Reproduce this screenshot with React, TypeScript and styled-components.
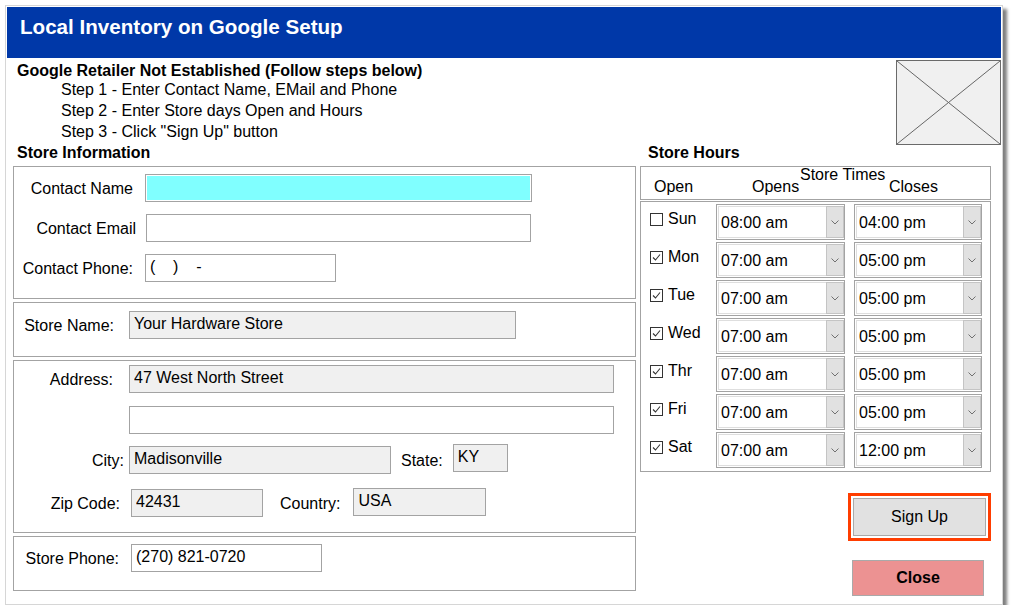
import React from "react";
import styled, { createGlobalStyle } from "styled-components";

const GlobalStyle = createGlobalStyle`
  html, body { margin: 0; padding: 0; background: #ffffff; }
  body {
    font-family: "Liberation Sans", Arial, sans-serif;
    font-size: 16px;
    color: #000;
  }
  *, *::before, *::after { box-sizing: border-box; }
`;

const Window = styled.div`
  margin: 5px 0 0 5px;
  width: 998px;
  height: 600px;
  border: 1px solid #d6d6d6;
  padding: 1px;
  background: #fff;
  box-shadow: 4px 4px 3px rgba(0, 0, 0, 0.5);
  display: flex;
  flex-direction: column;
`;

const TitleBar = styled.div`
  height: 51px;
  flex: none;
  background: #0038a8;
  color: #fff;
  font-family: "Liberation Sans", Arial, sans-serif;
  font-weight: bold;
  font-size: 20.6px;
  line-height: 24px;
  padding: 8px 0 0 13px;
`;

const Content = styled.div`
  flex: 1;
  display: flex;
  flex-direction: column;
  padding-left: 6px;
`;

const TopArea = styled.div`
  height: 86px;
  display: flex;
  align-items: flex-start;
`;

const Instructions = styled.div`
  padding: 4px 0 0 4px;
`;

const Heading = styled.div`
  font-weight: bold;
  line-height: 17px;
`;

const Step = styled.div`
  line-height: 21px;
  padding-left: 44px;
`;

const Placeholder = styled.div`
  margin-left: auto;
  margin-top: 2px;
  width: 105px;
  height: 85px;
  border: 1px solid #6a6a6a;
  background: #f0f0f0;
  svg { display: block; width: 100%; height: 100%; }
`;

const Main = styled.div`
  display: flex;
  gap: 4px;
`;

const Column = styled.div<{ $w: number }>`
  width: ${(p) => p.$w}px;
  flex: none;
  display: flex;
  flex-direction: column;
`;

const SectionTitle = styled.div<{ $pl: number }>`
  font-weight: bold;
  line-height: 17px;
  padding-left: ${(p) => p.$pl}px;
  margin-bottom: 5px;
`;

const Frames = styled.div`
  display: flex;
  flex-direction: column;
  gap: 3px;
`;

const Frame = styled.div<{ $h: number; $pt: number }>`
  height: ${(p) => p.$h}px;
  border: 1px solid #a3a3a3;
  padding-top: ${(p) => p.$pt}px;
  display: flex;
  flex-direction: column;
`;

const Row = styled.div<{ $mt?: number }>`
  display: flex;
  align-items: center;
  margin-top: ${(p) => p.$mt ?? 0}px;
`;

const Label = styled.div<{ $w?: number; $pr?: number; $pl?: number }>`
  ${(p) => (p.$w ? `width: ${p.$w}px;` : "")}
  flex: none;
  text-align: right;
  white-space: nowrap;
  padding-right: ${(p) => p.$pr ?? 0}px;
  padding-left: ${(p) => p.$pl ?? 0}px;
  line-height: 18px;
  padding-top: 2px;
`;

const Field = styled.input<{ $w: number; $bg?: string; $mt?: number }>`
  width: ${(p) => p.$w}px;
  height: 28px;
  flex: none;
  margin: ${(p) => p.$mt ?? 0}px 0 0 0;
  border: 1px solid #a3a3a3;
  background: ${(p) => p.$bg ?? "#ffffff"};
  font-family: "Liberation Sans", Arial, sans-serif;
  font-size: 16px;
  color: #000;
  padding: 0 4px 3px 4px;
  outline: none;
  &:focus {
    box-shadow: inset 0 0 0 1px #ffffff;
  }
`;

const HoursHeader = styled.div`
  height: 34px;
  border: 1px solid #a3a3a3;
  display: flex;
  flex-direction: column;
`;

const HeadLine = styled.div<{ $mt?: number; $lh: number }>`
  display: flex;
  line-height: ${(p) => p.$lh}px;
  margin-top: ${(p) => p.$mt ?? 0}px;
`;

const HeadText = styled.div<{ $w: number; $pl: number }>`
  width: ${(p) => p.$w}px;
  flex: none;
  padding-left: ${(p) => p.$pl}px;
  white-space: nowrap;
`;

const HoursBox = styled.div`
  margin-top: 1px;
  border: 1px solid #a3a3a3;
  padding: 2px 0 3px 0;
  display: flex;
  flex-direction: column;
  gap: 2px;
`;

const DayRow = styled.div`
  display: flex;
  height: 36px;
`;

const DayCell = styled.label`
  width: 75px;
  flex: none;
  display: flex;
  align-items: center;
  gap: 5px;
  padding-left: 9px;
  margin-bottom: 6px;
`;

const CheckBox = styled.span`
  width: 13px;
  height: 13px;
  flex: none;
  border: 1px solid #333;
  background: #fff;
  display: flex;
  align-items: center;
  justify-content: center;
  svg { display: block; }
`;

const TimeSelect = styled.div<{ $w: number; $ml?: number }>`
  width: ${(p) => p.$w}px;
  flex: none;
  margin-left: ${(p) => p.$ml ?? 0}px;
  border: 1px solid #a3a3a3;
  box-shadow: inset 0 0 0 1px #ffffff, inset 0 0 0 2px #dedede;
  display: flex;
  align-items: center;
  padding-left: 4px;
`;

const TimeText = styled.span`
  flex: 1;
  line-height: 18px;
  padding-top: 1px;
`;

const DropButton = styled.span`
  width: 18px;
  height: 32px;
  flex: none;
  background: #e1e1e1;
  border: 1px solid #c4c4c4;
  display: flex;
  align-items: center;
  justify-content: center;
  svg { display: block; }
`;

const ButtonArea = styled.div`
  display: flex;
  flex-direction: column;
  align-items: flex-end;
  margin-top: 21px;
`;

const Ring = styled.div`
  width: 143px;
  height: 48px;
  border: 3px solid #ff3d00;
  padding: 2px;
`;

const ActionButton = styled.button<{ $bg: string; $bold?: boolean }>`
  width: 100%;
  height: 100%;
  background: ${(p) => p.$bg};
  border: 1px solid #a9a9a9;
  font-family: "Liberation Sans", Arial, sans-serif;
  font-size: 16px;
  font-weight: ${(p) => (p.$bold ? "bold" : "normal")};
  color: #000;
  padding: 0;
`;

const CloseWrap = styled.div`
  width: 132px;
  height: 36px;
  margin-top: 19px;
  margin-right: 7px;
`;

const Check = () => (
  <svg width="11" height="11" viewBox="0 0 11 11">
    <polyline points="2,5.5 4.5,8 9,2.5" fill="none" stroke="#333" strokeWidth="1.1" />
  </svg>
);

const Chevron = () => (
  <svg width="8" height="5" viewBox="0 0 8 5">
    <polyline points="0.5,0.5 4,4 7.5,0.5" fill="none" stroke="#707070" strokeWidth="1" />
  </svg>
);

const hours = [
  { day: "Sun", open: false, opens: "08:00 am", closes: "04:00 pm" },
  { day: "Mon", open: true, opens: "07:00 am", closes: "05:00 pm" },
  { day: "Tue", open: true, opens: "07:00 am", closes: "05:00 pm" },
  { day: "Wed", open: true, opens: "07:00 am", closes: "05:00 pm" },
  { day: "Thr", open: true, opens: "07:00 am", closes: "05:00 pm" },
  { day: "Fri", open: true, opens: "07:00 am", closes: "05:00 pm" },
  { day: "Sat", open: true, opens: "07:00 am", closes: "12:00 pm" },
];

const GRAY = "#f0f0f0";

export default function App() {
  return (
    <>
      <GlobalStyle />
      <Window>
        <TitleBar>Local Inventory on Google Setup</TitleBar>
        <Content>
          <TopArea>
            <Instructions>
              <Heading>Google Retailer Not Established (Follow steps below)</Heading>
              <Step>Step 1 - Enter Contact Name, EMail and Phone</Step>
              <Step>Step 2 - Enter Store days Open and Hours</Step>
              <Step>Step 3 - Click "Sign Up" button</Step>
            </Instructions>
            <Placeholder>
              <svg viewBox="0 0 100 100" preserveAspectRatio="none">
                <line x1="0" y1="0" x2="100" y2="100" stroke="#666" strokeWidth="1" vectorEffect="non-scaling-stroke" />
                <line x1="100" y1="0" x2="0" y2="100" stroke="#666" strokeWidth="1" vectorEffect="non-scaling-stroke" />
              </svg>
            </Placeholder>
          </TopArea>
          <Main>
            <Column $w={623}>
              <SectionTitle $pl={4}>Store Information</SectionTitle>
              <Frames>
                <Frame $h={133} $pt={7}>
                  <Row>
                    <Label $w={131} $pr={12}>Contact Name</Label>
                    <Field $w={387} $bg="#80ffff" autoFocus defaultValue="" />
                  </Row>
                  <Row $mt={12}>
                    <Label $w={132} $pr={10}>Contact Email</Label>
                    <Field $w={385} defaultValue="" />
                  </Row>
                  <Row $mt={12}>
                    <Label $w={131} $pr={12}>Contact Phone:</Label>
                    <Field $w={191} defaultValue="(    )    -" />
                  </Row>
                </Frame>
                <Frame $h={55} $pt={8}>
                  <Row>
                    <Label $w={115} $pr={15}>Store Name:</Label>
                    <Field $w={387} $bg={GRAY} readOnly defaultValue="Your Hardware Store" />
                  </Row>
                </Frame>
                <Frame $h={173} $pt={4}>
                  <Row>
                    <Label $w={115} $pr={16}>Address:</Label>
                    <Field $w={485} $bg={GRAY} readOnly defaultValue="47 West North Street" />
                  </Row>
                  <Row $mt={13}>
                    <Label $w={115} />
                    <Field $w={485} defaultValue="" />
                  </Row>
                  <Row $mt={12}>
                    <Label $w={115} $pr={5}>City:</Label>
                    <Field $w={262} $bg={GRAY} readOnly defaultValue="Madisonville" />
                    <Label $pl={10} $pr={10}>State:</Label>
                    <Field $w={55} $bg={GRAY} $mt={-4} readOnly defaultValue="KY" />
                  </Row>
                  <Row $mt={15}>
                    <Label $w={117} $pr={11}>Zip Code:</Label>
                    <Field $w={132} $bg={GRAY} readOnly defaultValue="42431" />
                    <Label $pl={17} $pr={13}>Country:</Label>
                    <Field $w={133} $bg={GRAY} $mt={-2} readOnly defaultValue="USA" />
                  </Row>
                </Frame>
                <Frame $h={55} $pt={7}>
                  <Row>
                    <Label $w={117} $pr={12}>Store Phone:</Label>
                    <Field $w={191} readOnly defaultValue="(270) 821-0720" />
                  </Row>
                </Frame>
              </Frames>
            </Column>
            <Column $w={351}>
              <SectionTitle $pl={8}>Store Hours</SectionTitle>
              <HoursHeader>
                <HeadLine $lh={15}>
                  <HeadText $w={75} $pl={0} />
                  <HeadText $w={274} $pl={84}>Store Times</HeadText>
                </HeadLine>
                <HeadLine $lh={16} $mt={-3}>
                  <HeadText $w={75} $pl={13}>Open</HeadText>
                  <HeadText $w={138} $pl={36}>Opens</HeadText>
                  <HeadText $w={136} $pl={35}>Closes</HeadText>
                </HeadLine>
              </HoursHeader>
              <HoursBox>
                {hours.map((h) => (
                  <DayRow key={h.day}>
                    <DayCell>
                      <CheckBox>{h.open ? <Check /> : null}</CheckBox>
                      {h.day}
                    </DayCell>
                    <TimeSelect $w={129}>
                      <TimeText>{h.opens}</TimeText>
                      <DropButton><Chevron /></DropButton>
                    </TimeSelect>
                    <TimeSelect $w={128} $ml={9}>
                      <TimeText>{h.closes}</TimeText>
                      <DropButton><Chevron /></DropButton>
                    </TimeSelect>
                  </DayRow>
                ))}
              </HoursBox>
              <ButtonArea>
                <Ring>
                  <ActionButton $bg="#e1e1e1">Sign Up</ActionButton>
                </Ring>
                <CloseWrap>
                  <ActionButton $bg="#ec9292" $bold>Close</ActionButton>
                </CloseWrap>
              </ButtonArea>
            </Column>
          </Main>
        </Content>
      </Window>
    </>
  );
}
